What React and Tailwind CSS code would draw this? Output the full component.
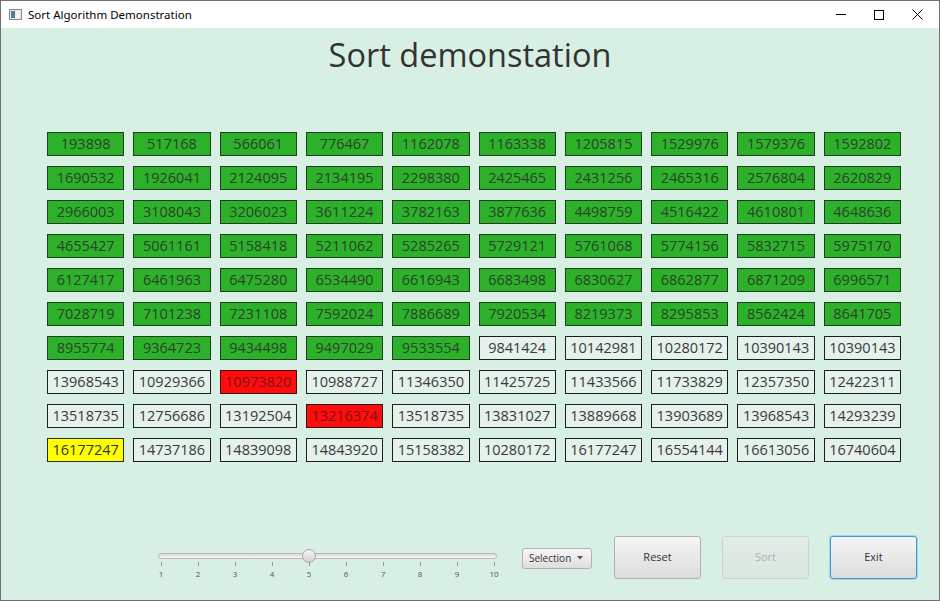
import React from 'react';

const rows = [
  ['193898', '517168', '566061', '776467', '1162078', '1163338', '1205815', '1529976', '1579376', '1592802'],
  ['1690532', '1926041', '2124095', '2134195', '2298380', '2425465', '2431256', '2465316', '2576804', '2620829'],
  ['2966003', '3108043', '3206023', '3611224', '3782163', '3877636', '4498759', '4516422', '4610801', '4648636'],
  ['4655427', '5061161', '5158418', '5211062', '5285265', '5729121', '5761068', '5774156', '5832715', '5975170'],
  ['6127417', '6461963', '6475280', '6534490', '6616943', '6683498', '6830627', '6862877', '6871209', '6996571'],
  ['7028719', '7101238', '7231108', '7592024', '7886689', '7920534', '8219373', '8295853', '8562424', '8641705'],
  ['8955774', '9364723', '9434498', '9497029', '9533554', '9841424', '10142981', '10280172', '10390143', '10390143'],
  ['13968543', '10929366', '10973820', '10988727', '11346350', '11425725', '11433566', '11733829', '12357350', '12422311'],
  ['13518735', '12756686', '13192504', '13216374', '13518735', '13831027', '13889668', '13903689', '13968543', '14293239'],
  ['16177247', '14737186', '14839098', '14843920', '15158382', '10280172', '16177247', '16554144', '16613056', '16740604'],
];

// index = row * 10 + col
const red = [72, 83];
const yellow = [90];

const cellClass = (idx) => {
  if (red.includes(idx)) return 'bg-[#ff0d0d] border-[#3a1010] text-[#7a1414]';
  if (yellow.includes(idx)) return 'bg-[#ffff00] border-[#2a2a2a] text-[#333333]';
  if (idx < 65) return 'bg-[#2eb12a] border-[#1d3f1d] text-[#2a432a]';
  return 'bg-[#e4f2eb] border-[#1e1e1e] text-[#3a3a3a]';
};

const ticks = [1, 2, 3, 4, 5, 6, 7, 8, 9, 10];

const Slider = () => (
  <div className="relative w-[346px] h-[36px]">
    {/* track */}
    <div className="absolute left-[2px] top-[8px] w-[339px] h-[6px] rounded-full border border-[#b9b9b9] bg-gradient-to-b from-[#d8d8d8] to-[#fbfbfb]"></div>
    {/* thumb */}
    <div className="absolute left-[146px] top-[4px] w-[14px] h-[14px] rounded-full border border-[#a8a8a8] bg-gradient-to-b from-[#f6f6f6] to-[#d2d2d2]"></div>
    {ticks.map((t, i) => (
      <div key={t} className="absolute top-[17px] flex flex-col items-center w-[20px]" style={{ left: 5 + i * 37 - 10 }}>
        <div className="w-px h-[4px] bg-[#9a9a9a]"></div>
        <span className="mt-[3px] text-[8px] leading-[10px] text-[#555]">{t}</span>
      </div>
    ))}
  </div>
);

const Button = ({ label, disabled, focused }) => (
  <button
    className={`w-[87px] h-[43px] rounded-[3px] border text-[11px] ${
      disabled
        ? 'border-[#c9d6cf] bg-gradient-to-b from-[#e3ece7] to-[#dbe6e0] text-[#a9b3ae]'
        : focused
        ? 'border-[#3d9bd1] shadow-[0_0_0_1px_#a7d3ec] bg-gradient-to-b from-[#f6f6f6] to-[#dcdcdc] text-[#333]'
        : 'border-[#b1b1b1] bg-gradient-to-b from-[#f6f6f6] to-[#dcdcdc] text-[#333]'
    }`}
  >
    {label}
  </button>
);

export default function App() {
  return (
    <div
      className="w-[940px] h-[601px] flex flex-col border border-[#707070] bg-white overflow-hidden"
      style={{ fontFamily: '"Open Sans", "Noto Sans", sans-serif' }}
    >
      {/* title bar */}
      <div className="h-[27px] flex items-center bg-white shrink-0">
        <div className="ml-[8px] w-[13px] h-[11px] border border-[#8a8a8a] bg-[#dfe6ea] flex p-[1px] gap-[1px]">
          <div className="w-[4px] h-full bg-[#4d7f98]"></div>
          <div className="flex-1 h-full bg-[#f2f2f2]"></div>
        </div>
        <span className="ml-[6px] text-[11.5px] text-black" style={{ fontFamily: '"Noto Sans", sans-serif' }}>
          Sort Algorithm Demonstration
        </span>
        <div className="ml-auto mr-[3px] flex items-center h-full">
          <div className="w-[38px] h-full flex items-center justify-center">
            <div className="w-[10px] h-px bg-black"></div>
          </div>
          <div className="w-[38px] h-full flex items-center justify-center">
            <div className="w-[10px] h-[10px] border border-black"></div>
          </div>
          <div className="w-[38px] h-full flex items-center justify-center">
            <svg width="11" height="11" viewBox="0 0 11 11">
              <path d="M0.5 0.5 L10.5 10.5 M10.5 0.5 L0.5 10.5" stroke="#000" strokeWidth="1" />
            </svg>
          </div>
        </div>
      </div>

      {/* content */}
      <div className="flex-1 bg-[#d8efe3] flex flex-col">
        <h1 className="mt-[5px] text-center text-[32.5px] leading-[44px] text-[#333333]">Sort demonstation</h1>

        <div className="ml-[46px] mt-[55px] w-[854px] grid grid-cols-10 gap-x-[9px] gap-y-[10px]">
          {rows.flat().map((v, idx) => (
            <div
              key={idx}
              className={`h-[24px] border flex items-center justify-center text-[14.5px] leading-none ${cellClass(idx)}`}
            >
              {v}
            </div>
          ))}
        </div>

        <div className="mt-[72px] flex items-center">
          <div className="ml-[155px] mt-[11px]">
            <Slider />
          </div>
          <button className="ml-[20px] mt-[1px] w-[70px] h-[21px] rounded-[3px] border border-[#b3b3b3] bg-gradient-to-b from-[#f7f7f7] to-[#dedede] flex items-center pl-[6px] pr-[8px] text-[10px] text-[#333]">
            <span>Selection</span>
            <svg className="ml-auto" width="6" height="4" viewBox="0 0 6 4">
              <path d="M0 0 L6 0 L3 3.5 Z" fill="#555" />
            </svg>
          </button>
          <div className="ml-[22px] flex gap-[21px]">
            <Button label="Reset" />
            <Button label="Sort" disabled />
            <Button label="Exit" focused />
          </div>
        </div>
      </div>
    </div>
  );
}
